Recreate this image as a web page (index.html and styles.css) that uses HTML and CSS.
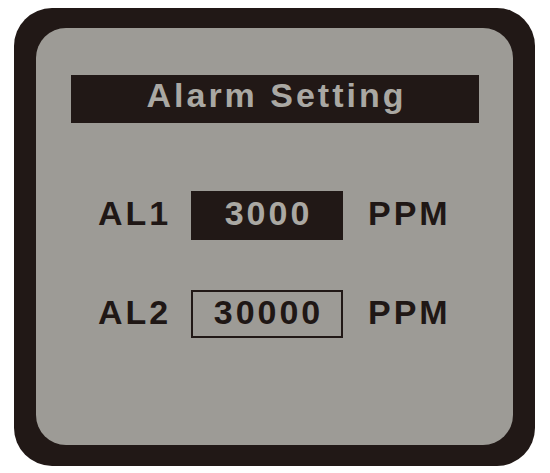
FILE: index.html
```html
<!DOCTYPE html>
<html lang="en">
<head>
  <meta charset="UTF-8">
  <meta name="viewport" content="width=device-width, initial-scale=1.0">
  <title>Alarm Setting</title>
  <link rel="stylesheet" href="styles.css">
</head>
<body>
  <div class="frame">
    <div class="panel">
      <div class="title">Alarm Setting</div>

      <div class="settings">
        <div class="row">
          <span class="label">AL1</span>
          <span class="value value-active">3000</span>
          <span class="unit">PPM</span>
        </div>

        <div class="row">
          <span class="label">AL2</span>
          <span class="value value-outline">30000</span>
          <span class="unit">PPM</span>
        </div>
      </div>
    </div>
  </div>
</body>
</html>
```

FILE: styles.css
```css
body {
  margin: 0;
  background-color: #fff;
  font-family: 'Liberation Sans', Arial, sans-serif;
  font-weight: bold;
  font-size: 34px;
  letter-spacing: 3px;
  color: #1f1715;
}

.frame {
  box-sizing: border-box;
  width: 521px;
  height: 458px;
  margin: 8px 0 0 14px;
  padding: 20px 22px 21px 22px;
  background-color: #211816;
  border-radius: 38px;
}

.panel {
  box-sizing: border-box;
  height: 100%;
  padding: 47px 34px 0 35px;
  background-color: #9d9b96;
  border-radius: 30px;
}

.title {
  height: 48px;
  line-height: 41px;
  text-align: center;
  text-indent: 3px;
  background-color: #211816;
  color: #aaa8a3;
}

.settings {
  margin-top: 68px;
  padding-left: 27px;
}

.row {
  display: flex;
  align-items: baseline;
  margin-bottom: 50px;
}

.label {
  width: 93px;
}

.value {
  box-sizing: border-box;
  width: 152px;
  height: 49px;
  text-align: center;
  text-indent: 3px;
}

.value-active {
  line-height: 45px;
  background-color: #211816;
  color: #aaa8a3;
}

.value-outline {
  height: 48px;
  line-height: 40px;
  border: 2px solid #211816;
}

.unit {
  margin-left: 25px;
}
```
